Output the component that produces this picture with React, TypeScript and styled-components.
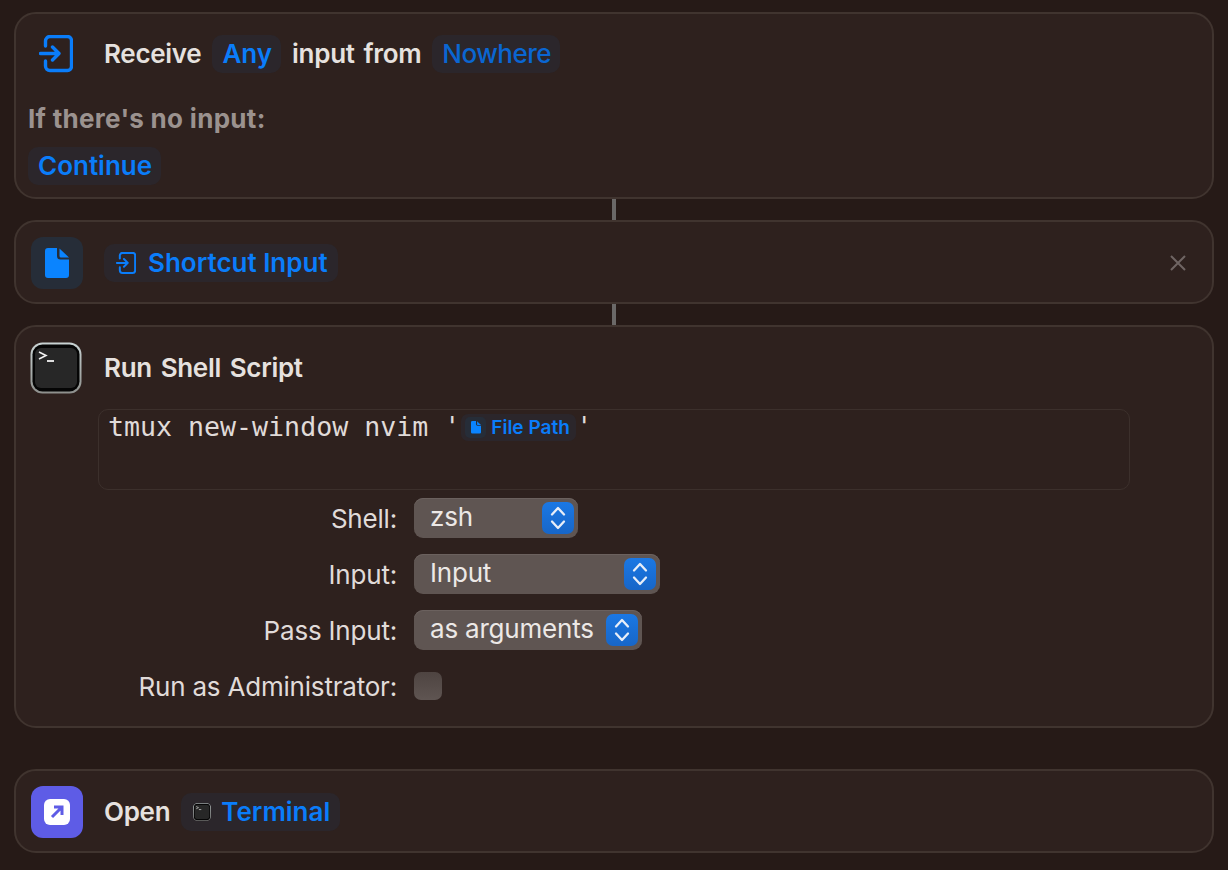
import styled, { createGlobalStyle } from 'styled-components';

const GlobalStyle = createGlobalStyle`
  html, body {
    margin: 0;
    height: 100%;
    background: #261a17;
  }
  body {
    font-family: Inter, "Liberation Sans", sans-serif;
    -webkit-font-smoothing: antialiased;
  }
`;

function InputIcon({ size }: { size: number }) {
  return (
    <svg width={size} height={size * 1.09} viewBox="0 0 34 37" fill="none" stroke="#0a7dfa" strokeWidth="3.4" strokeLinecap="round" strokeLinejoin="round">
      <path d="M6.5 11 V6 a4.5 4.5 0 0 1 4.5-4.5 h17.5 a4 4 0 0 1 4 4 v26 a4 4 0 0 1-4 4 H11 a4.5 4.5 0 0 1-4.5-4.5 v-5" />
      <path d="M1.5 18.5 h18 M13.5 12 l6.5 6.5 -6.5 6.5" />
    </svg>
  );
}

function DocIcon({ size }: { size: number }) {
  return (
    <svg width={size} height={size * 1.25} viewBox="0 0 24 30" fill="#0a84ff">
      <path d="M3 0 H12 V8 a3.5 3.5 0 0 0 3.5 3.5 H24 V27 a3 3 0 0 1-3 3 H3 a3 3 0 0 1-3-3 V3 a3 3 0 0 1 3-3z" />
      <path d="M14.5 .5 L24 9.5 H16 a1.5 1.5 0 0 1-1.5-1.5z" />
    </svg>
  );
}

function TerminalIcon({ size }: { size: number }) {
  return (
    <svg width={size} height={size} viewBox="0 0 52 52" fill="none">
      <defs>
        <linearGradient id="termRim" x1="0" y1="0" x2="0" y2="1">
          <stop offset="0" stopColor="#c9d3d3" />
          <stop offset="1" stopColor="#8d8f8c" />
        </linearGradient>
      </defs>
      <rect x="0.5" y="0.5" width="51" height="51" rx="12" fill="url(#termRim)" />
      <rect x="2.5" y="2.5" width="47" height="47" rx="10" fill="#050505" />
      <rect x="5" y="6" width="42" height="40" rx="6" fill="#272727" />
      <path d="M9 10 l7 3.5 -7 3.5" stroke="#f2f2f2" strokeWidth="1.6" />
      <path d="M17 19 h7" stroke="#f2f2f2" strokeWidth="1.8" />
    </svg>
  );
}

function Chevrons() {
  return (
    <svg width="16" height="24" viewBox="0 0 16 24" fill="none" stroke="#e8eef8" strokeWidth="2.3" strokeLinecap="round" strokeLinejoin="round">
      <path d="M2 8.5 L8 2 L14 8.5" />
      <path d="M2 15.5 L8 22 L14 15.5" />
    </svg>
  );
}

export default function App() {
  return (
    <>
      <GlobalStyle />
      <Page>
        <Card $top={14} $bottom={12}>
          <Header>
            <IconSlot>
              <InputIcon size={34} />
            </IconSlot>
            <Sentence>
              <Title>Receive</Title>
              <Pill>Any</Pill>
              <Title>input from</Title>
              <Pill $dim>Nowhere</Pill>
            </Sentence>
          </Header>
          <SubSection>
            <Muted>If there's no input:</Muted>
            <Pill>Continue</Pill>
          </SubSection>
        </Card>
        <Connector />
        <Card>
          <Header>
            <IconTile $bg="#262d38">
              <DocIcon size={24} />
            </IconTile>
            <Sentence>
              <Pill $icon $gap={12}>
                <InputIcon size={20} />
                Shortcut Input
              </Pill>
            </Sentence>
            <CloseMark width="16" height="16" viewBox="0 0 16 16" fill="none" stroke="#6f6563" strokeWidth="2">
              <path d="M1 1 L15 15 M15 1 L1 15" />
            </CloseMark>
          </Header>
        </Card>
        <Connector />
        <Card $bottom={20}>
          <Header>
            <IconSlot>
              <TerminalIcon size={52} />
            </IconSlot>
            <Sentence>
              <Title>Run Shell Script</Title>
            </Sentence>
          </Header>
          <ScriptBox>
            <Code>tmux new-window nvim '</Code>
            <VarPill>
              <VarIcon>
                <DocIcon size={10} />
              </VarIcon>
              File Path
            </VarPill>
            <Code>'</Code>
          </ScriptBox>
          <Form>
            <FieldLabel>Shell:</FieldLabel>
            <Select $width={164}>
              <SelectValue>zsh</SelectValue>
              <Stepper>
                <Chevrons />
              </Stepper>
            </Select>
            <FieldLabel>Input:</FieldLabel>
            <Select $width={246}>
              <SelectValue>Input</SelectValue>
              <Stepper>
                <Chevrons />
              </Stepper>
            </Select>
            <FieldLabel>Pass Input:</FieldLabel>
            <Select $width={228}>
              <SelectValue>as arguments</SelectValue>
              <Stepper>
                <Chevrons />
              </Stepper>
            </Select>
            <FieldLabel>Run as Administrator:</FieldLabel>
            <Checkbox />
          </Form>
        </Card>
        <Gap />
        <Card>
          <Header>
            <IconTile $bg="#5e5ce6">
              <svg width="26" height="26" viewBox="0 0 26 26" fill="none">
                <rect width="26" height="26" rx="6" fill="#fff" />
                <path d="M8 18 L17.5 8.5 M10 8 H18 V16" stroke="#5e5ce6" strokeWidth="3" />
              </svg>
            </IconTile>
            <Sentence>
              <Title>Open</Title>
              <Pill $icon $gap={10}>
                <TerminalIcon size={18} />
                Terminal
              </Pill>
            </Sentence>
          </Header>
        </Card>
      </Page>
    </>
  );
}

const Page = styled.main`
  width: 1200px;
  margin: 0 auto;
  padding-top: 12px;
  display: flex;
  flex-direction: column;
`;

const Card = styled.section<{ $top?: number; $bottom?: number }>`
  box-sizing: border-box;
  border: 2px solid #40342f;
  border-radius: 22px;
  background: #2e211e;
  padding: ${(p) => p.$top ?? 15}px 14px ${(p) => p.$bottom ?? 13}px;
`;

const Connector = styled.div`
  width: 4px;
  height: 21px;
  margin: 0 auto;
  background: #6b6968;
`;

const Gap = styled.div`
  height: 41px;
`;

const Header = styled.div`
  display: flex;
  align-items: center;
  gap: 22px;
  height: 52px;
`;

const IconSlot = styled.div`
  width: 52px;
  height: 52px;
  flex: none;
  display: flex;
  align-items: center;
  justify-content: center;
`;

const IconTile = styled(IconSlot)<{ $bg: string }>`
  margin: 0 -1px 0 1px;
  background: ${(p) => p.$bg};
  border-radius: 12px;
`;

const Sentence = styled.div`
  display: flex;
  align-items: center;
  gap: 11px;
  flex: 1;
`;

const Title = styled.span`
  padding-bottom: 2px;
  font-size: 26px;
  font-weight: 600;
  letter-spacing: -0.3px;
  word-spacing: 2.5px;
  color: #e6e1df;
`;

const Pill = styled.span<{ $dim?: boolean; $icon?: boolean; $gap?: number }>`
  box-sizing: border-box;
  display: inline-flex;
  align-items: center;
  gap: ${(p) => p.$gap ?? 0}px;
  height: 38px;
  padding: 0 ${(p) => (p.$icon ? 10 : 9)}px 2px ${(p) => (p.$icon ? 12 : 10)}px;
  border-radius: 10px;
  background: #2b262b;
  color: ${(p) => (p.$dim ? '#0a66d2' : '#0a7dfa')};
  font-size: 26px;
  font-weight: ${(p) => (p.$dim ? 500 : 600)};
  letter-spacing: ${(p) => (p.$dim ? -0.5 : 0)}px;

  svg {
    margin-top: 2px;
  }
`;

const SubSection = styled.div`
  margin: 24px 0 0 -2px;
  display: flex;
  flex-direction: column;
  align-items: flex-start;
  gap: 13px;
`;

const Muted = styled.span`
  font-size: 26px;
  line-height: 30px;
  font-weight: 700;
  letter-spacing: 0.3px;
  color: #9b928f;
`;

const CloseMark = styled.svg`
  flex: none;
  margin-right: 12px;
`;

const ScriptBox = styled.div`
  box-sizing: border-box;
  margin: 15px 0 0 68px;
  width: 1032px;
  height: 81px;
  padding: 2px 0 0 9px;
  border: 1px solid #3c302c;
  border-radius: 10px;
  display: flex;
  align-items: flex-start;
`;

const Code = styled.span`
  font-family: "DejaVu Sans Mono", "Liberation Mono", monospace;
  font-size: 26.6px;
  line-height: 30px;
  color: #e0dbd9;
  white-space: pre;
`;

const VarPill = styled.span`
  display: inline-flex;
  align-items: center;
  gap: 5px;
  width: 115px;
  height: 27px;
  box-sizing: border-box;
  margin: 2px 0 0 1px;
  padding-left: 4px;
  border-radius: 7px;
  background: #2b262b;
  color: #0a7dfa;
  font-size: 19px;
  font-weight: 600;
  white-space: nowrap;
`;

const VarIcon = styled.span`
  width: 21px;
  height: 21px;
  flex: none;
  display: flex;
  align-items: center;
  justify-content: center;
  border-radius: 5px;
  background: #262d38;
`;

const Form = styled.div`
  margin-top: 8px;
  display: grid;
  grid-template-columns: 367px 1fr;
  grid-auto-rows: 40px;
  column-gap: 17px;
  row-gap: 16px;
  align-items: center;
`;

const FieldLabel = styled.span`
  text-align: right;
  font-size: 26px;
  color: #e0dbd9;
  letter-spacing: -0.2px;
`;

const Select = styled.div<{ $width: number }>`
  box-sizing: border-box;
  width: ${(p) => p.$width}px;
  height: 40px;
  padding: 0 4px 0 16px;
  display: flex;
  align-items: center;
  justify-content: space-between;
  border-radius: 9px;
  background: #5f5552;
  box-shadow: inset 0 1px 0 #6b615e;
  color: #ece8e6;
  font-size: 26px;
  letter-spacing: -0.2px;
`;

const SelectValue = styled.span`
  padding-bottom: 3px;
`;

const Stepper = styled.span`
  width: 32px;
  height: 32px;
  flex: none;
  display: flex;
  align-items: center;
  justify-content: center;
  border-radius: 7px;
  background: linear-gradient(#1b78e4, #1766c8);
`;

const Checkbox = styled.div`
  width: 28px;
  height: 28px;
  border-radius: 7px;
  background: linear-gradient(#4e4441, #5f5552);
`;
